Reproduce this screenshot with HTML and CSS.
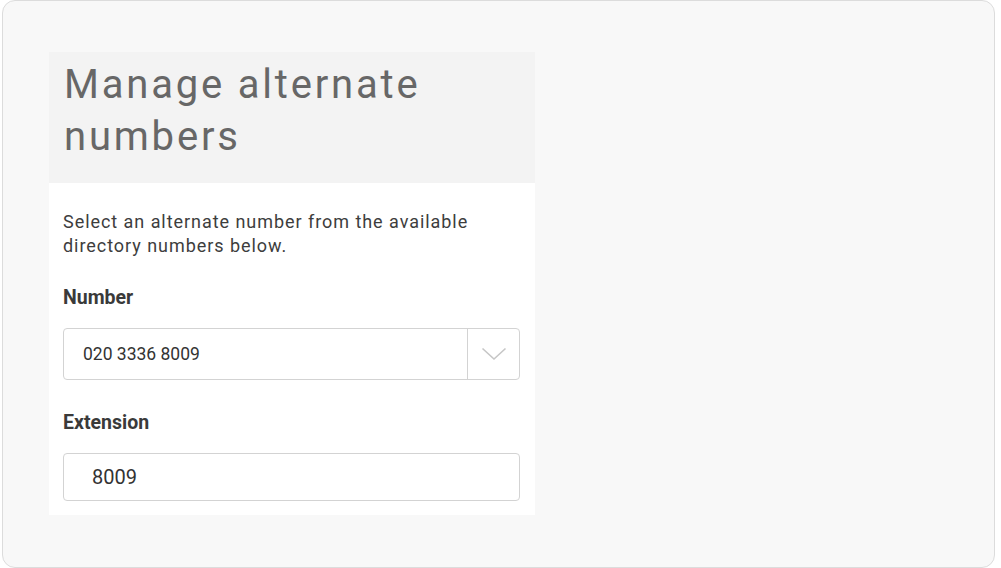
FILE: index.html
```html
<!DOCTYPE html>
<html>
<head>
<meta charset="utf-8">
<link rel="stylesheet" href="styles.css">
</head>
<body>
<div class="frame">
  <div class="card">
    <div class="card-head">
      <h1 class="title">Manage alternate numbers</h1>
    </div>
    <div class="card-body">
      <p class="intro">Select an alternate number from the available directory numbers below.</p>
      <div class="field">
        <label class="label">Number</label>
        <div class="select">
          <span class="select-value">020 3336 8009</span>
          <span class="select-btn">
            <svg width="26" height="14" viewBox="0 0 26 14"><path d="M1.5 1.5 L13 12 L24.5 1.5" fill="none" stroke="#c6c6c6" stroke-width="1.6"/></svg>
          </span>
        </div>
      </div>
      <div class="field field-ext">
        <label class="label">Extension</label>
        <div class="input">8009</div>
      </div>
    </div>
  </div>
</div>
</body>
</html>
```
FILE: styles.css
```css
* { box-sizing: border-box; }
html, body { margin: 0; padding: 0; background: #ffffff; }
body { font-family: Roboto, "Liberation Sans", sans-serif; }
.frame {
  margin-left: 2px;
  width: 993px;
  height: 568px;
  border: 1px solid #dcdcdc;
  border-radius: 13px;
  background: #f8f8f8;
  padding: 51px 0 0 46px;
}
.card { width: 486px; }
.card-head {
  background: #f3f3f3;
  height: 131px;
  padding: 7px 10px 0 15px;
}
.title {
  margin: 0;
  font-weight: 400;
  font-size: 40px;
  line-height: 52px;
  color: #676767;
  letter-spacing: 2.8px;
}
.card-body {
  background: #ffffff;
  height: 332px;
  padding: 27px 15px 0 14px;
}
.intro {
  margin: 0;
  font-size: 18px;
  line-height: 24px;
  color: #3d3d3d;
  letter-spacing: 0.95px;
}
.field { margin-top: 28px; }
.field-ext { margin-top: 31px; }
.label {
  display: block;
  font-size: 19.5px;
  font-weight: 700;
  color: #3a3a3a;
  line-height: 24px;
  margin-bottom: 18px;
}
.select {
  display: flex;
  height: 52px;
  border: 1px solid #d3d3d3;
  border-radius: 4px;
  background: #fff;
}
.select-value {
  flex: 1;
  display: flex;
  align-items: center;
  padding-left: 19px;
  font-size: 17.5px;
  color: #333;
}
.select-btn {
  width: 52px;
  border-left: 1px solid #d3d3d3;
  display: flex;
  align-items: center;
  justify-content: center;
}
.input {
  height: 48px;
  border: 1px solid #d3d3d3;
  border-radius: 4px;
  background: #fff;
  display: flex;
  align-items: center;
  padding-left: 28px;
  font-size: 20px;
  color: #333;
}
```
